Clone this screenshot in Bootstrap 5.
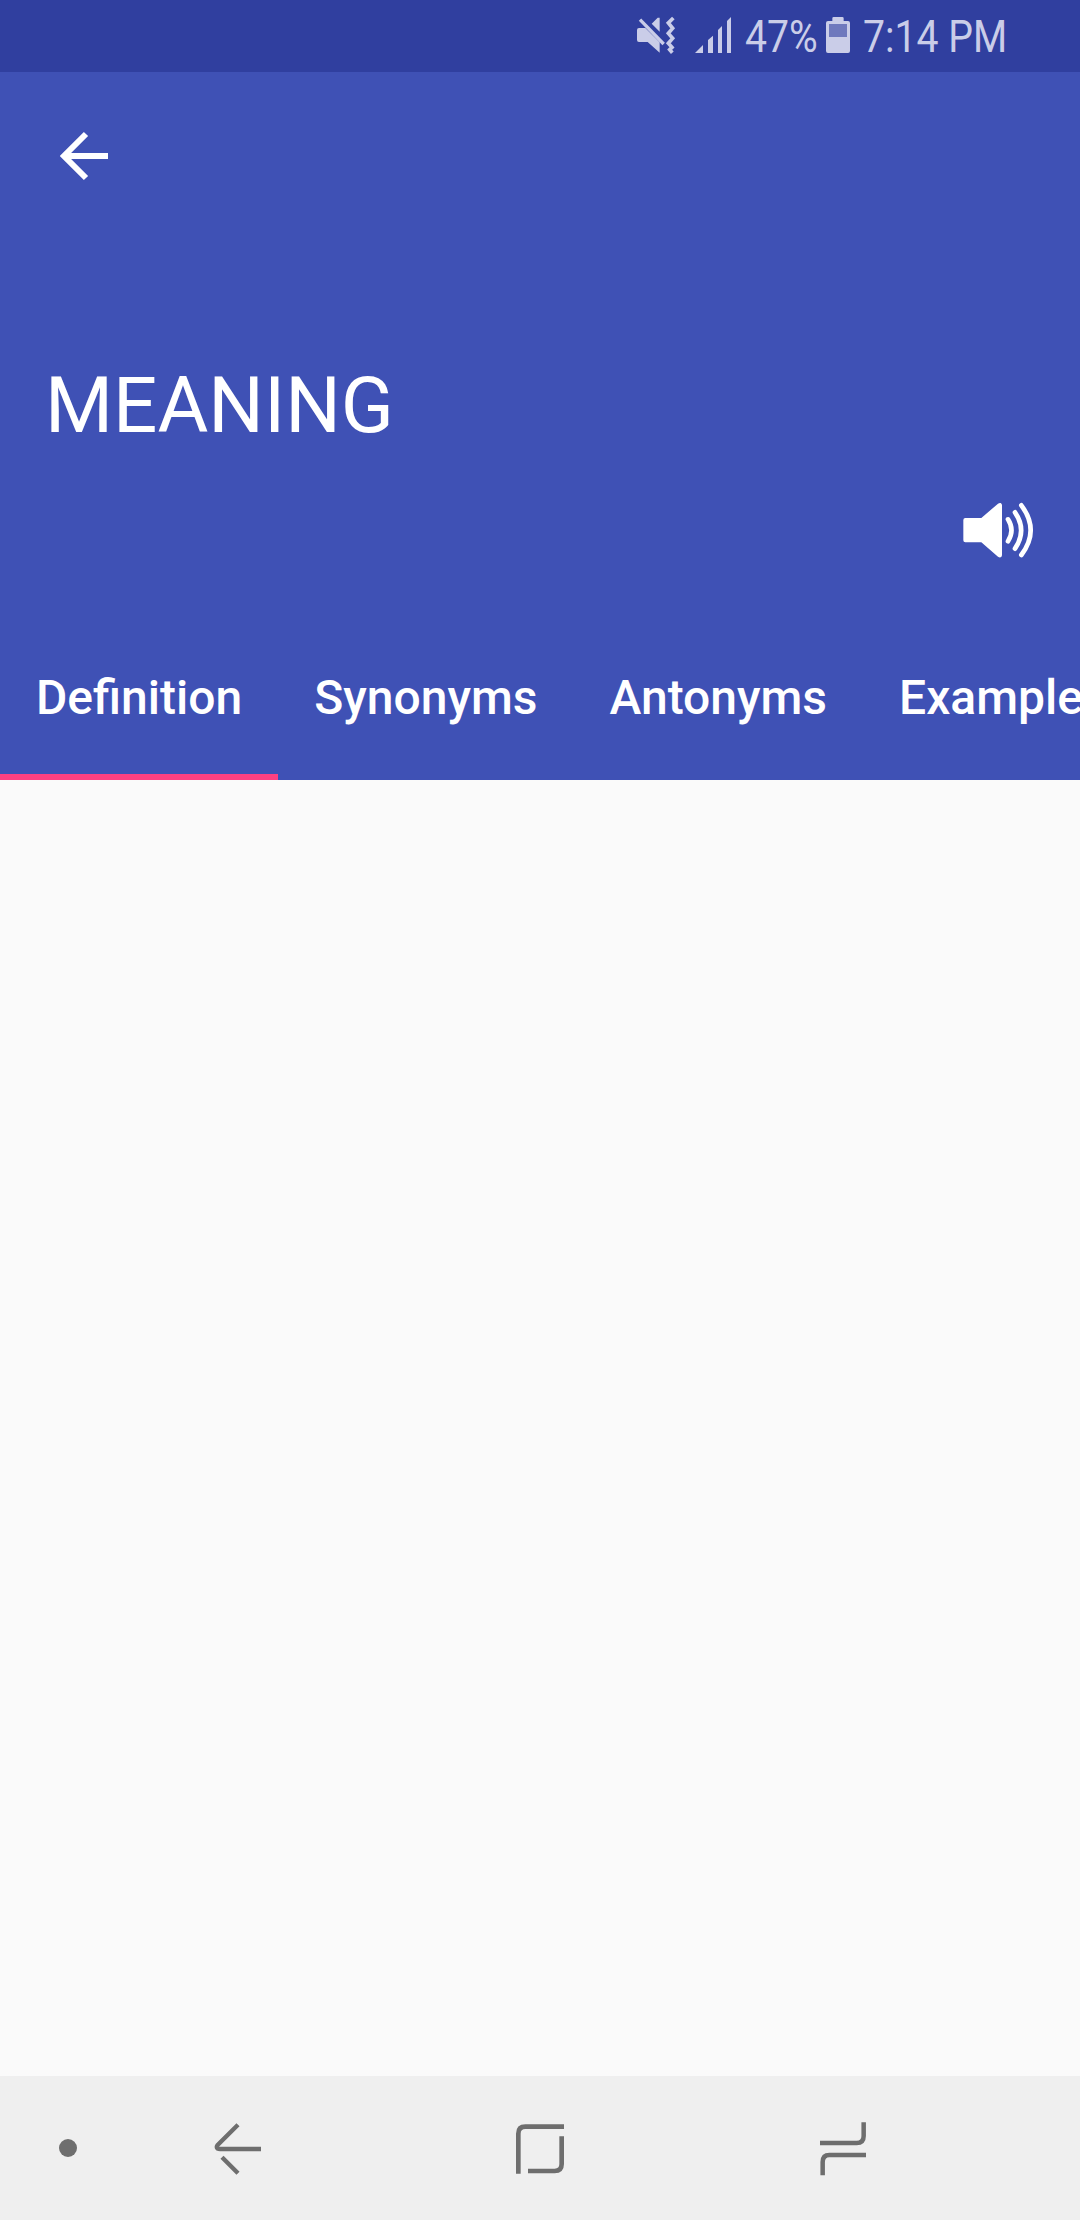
<!DOCTYPE html>
<html lang="en">
<head>
<meta charset="utf-8">
<title>Meaning</title>
<meta name="viewport" content="width=device-width, initial-scale=1">
<link href="https://cdn.jsdelivr.net/npm/bootstrap@5.3.0/dist/css/bootstrap.min.css" rel="stylesheet">
<style>
body{font-family:Roboto,"Noto Sans",sans-serif;background:#fafafa}
svg{display:block;flex:none}
.screen{width:1080px;height:2220px;overflow:hidden}
.status-strip{height:72px;background:#303f9f;color:#cacde8;font-size:45px;line-height:72px;padding-right:74px}
.status-label{white-space:nowrap;transform-origin:0 50%;transform:scaleX(.87);padding-top:1px;height:72px}
.pct{width:72px;margin-left:13px}
.clock{width:143px;margin-left:12px}
.signal{margin-left:18px}
.battery{margin-left:8px}
.app-head{height:708px;background:#3f51b5;color:#fff}
.back-btn{padding:52px 0 0 54px;height:168px}
.word-title{font-size:78px;line-height:92px;padding:120px 0 0 45px;height:260px;font-weight:400}
.speaker-row{height:134px;padding-right:45px}
.app-tabs{height:146px;overflow:hidden}
.app-tabs .nav-link{height:146px;padding:36px 36px 0;font-size:48px;line-height:56px;font-weight:500;color:#fff;white-space:nowrap;border-radius:0;border-bottom:6px solid transparent}
.app-tabs .nav-link.active{border-bottom-color:#ff4081}
.soft-keys{height:144px;background:#efefef}
.key-dot{margin-left:56px}
.key-back{margin-left:133px}
.key-home{margin-left:252px}
.key-recent{margin-left:253px}
</style>
<script src="https://cdn.jsdelivr.net/npm/bootstrap@5.3.0/dist/js/bootstrap.bundle.min.js"></script>
</head>
<body>
<div class="screen d-flex flex-column">
  <div class="status-strip d-flex justify-content-end">
    <svg width="40" height="72" viewBox="48 0 120 216" fill="#cacde8">
      <path d="M57 84H76L119 127V158L83 126H57Q51 126 51 120V90Q51 84 57 84ZM95 71L113 53H119V95Z"/>
      <path d="M60 59L131 132" stroke="#cacde8" stroke-width="10" fill="none"/>
      <path d="M160 54L145 69L158 85L145 100L158 115L145 130L156 142L149 149L157 158" stroke="#cacde8" stroke-width="11" fill="none"/>
    </svg>
    <svg class="signal" width="38" height="72" viewBox="222 0 114 216" fill="#cacde8">
      <path d="M225 159L249 135V159ZM264 159V120L279 107V159ZM294 159V90L306 78V159ZM321 159V63L333 51V159Z"/>
    </svg>
    <div class="status-label pct">47%</div>
    <svg class="battery" width="26" height="72" viewBox="615 0 78 216">
      <path fill="#cacde8" d="M637 63V55Q637 51 641 51H667Q671 51 671 55V63H684Q690 63 690 69V153Q690 159 684 159H624Q618 159 618 153V69Q618 63 624 63Z"/>
      <path fill="#6f79bd" d="M627 72H681V111H627Z"/>
    </svg>
    <div class="status-label clock">7:14 PM</div>
  </div>

  <header class="app-head d-flex flex-column">
    <div class="back-btn">
      <svg width="60" height="64" viewBox="72 42 180 192"><path d="M168 72L102 138L168 204M105 138H234" fill="none" stroke="#fff" stroke-width="18"/></svg>
    </div>
    <h1 class="word-title m-0">MEANING</h1>
    <div class="speaker-row d-flex justify-content-end">
      <svg width="74" height="60" viewBox="63 60 222 180">
        <path fill="#fff" d="M76 114H124L174 71Q178 68 182 69Q186 71 186 76V225Q186 230 182 232Q178 233 174 230L124 187H76Q70 187 70 181V120Q70 114 76 114Z"/>
        <path fill="none" stroke="#fff" stroke-width="14" stroke-linecap="round" d="M204 118Q225 151 204 184M225 97Q262 151 225 206M244 76Q300 151 244 225"/>
      </svg>
    </div>
    <nav class="app-tabs nav flex-nowrap">
      <a class="nav-link active">Definition</a>
      <a class="nav-link">Synonyms</a>
      <a class="nav-link">Antonyms</a>
      <a class="nav-link">Examples</a>
    </nav>
  </header>

  <main class="flex-grow-1"></main>

  <footer class="soft-keys d-flex">
    <svg class="key-dot" width="24" height="144" viewBox="0 0 24 144"><circle cx="12" cy="72" r="9" fill="#6e6e6e"/></svg>
    <svg class="key-back" width="50" height="144" viewBox="549 48 150 432"><path d="M624 194L563 255Q558 261 563 266Q565 267 570 267H693M576 292L624 340" fill="none" stroke="#6e6e6e" stroke-width="13"/></svg>
    <svg class="key-home" width="50" height="144" viewBox="75 -72 150 432"><path d="M85 221V101Q85 80 106 80H222M215 109V192Q215 213 194 213H114" fill="none" stroke="#6e6e6e" stroke-width="14"/></svg>
    <svg class="key-recent" width="50" height="144" viewBox="84 -72 150 432"><path d="M90 129H200Q221 129 221 108V67M228 165H118Q98 165 98 186V226" fill="none" stroke="#6e6e6e" stroke-width="13.5"/></svg>
  </footer>
</div>
</body>
</html>
